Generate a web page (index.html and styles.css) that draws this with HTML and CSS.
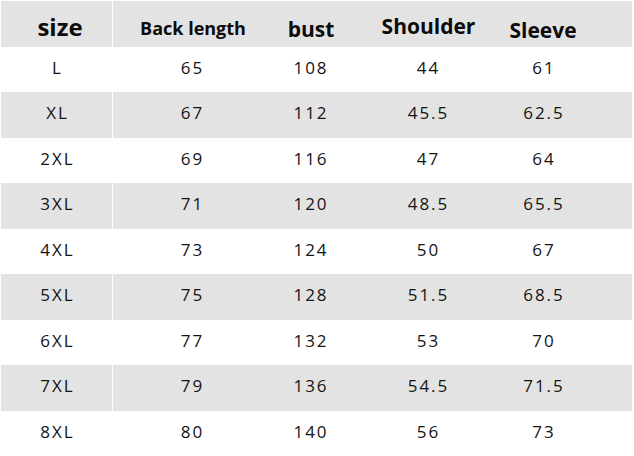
FILE: index.html
```html
<!DOCTYPE html>
<html>
<head>
<meta charset="utf-8">
<link rel="stylesheet" href="styles.css">
</head>
<body>
<div class="chart">
  <div class="row head">
    <div class="cell first h-size">size</div>
    <div class="cell h-back">Back length</div>
    <div class="cell h-bust">bust</div>
    <div class="cell h-shoulder">Shoulder</div>
    <div class="cell h-sleeve">Sleeve</div>
    <div class="cell"></div>
  </div>
  <div class="row"><div class="cell first">L</div><div class="cell">65</div><div class="cell">108</div><div class="cell">44</div><div class="cell">61</div><div class="cell"></div></div>
  <div class="row shade"><div class="cell first">XL</div><div class="cell">67</div><div class="cell">112</div><div class="cell">45.5</div><div class="cell">62.5</div><div class="cell"></div></div>
  <div class="row"><div class="cell first">2XL</div><div class="cell">69</div><div class="cell">116</div><div class="cell">47</div><div class="cell">64</div><div class="cell"></div></div>
  <div class="row shade"><div class="cell first">3XL</div><div class="cell">71</div><div class="cell">120</div><div class="cell">48.5</div><div class="cell">65.5</div><div class="cell"></div></div>
  <div class="row"><div class="cell first">4XL</div><div class="cell">73</div><div class="cell">124</div><div class="cell">50</div><div class="cell">67</div><div class="cell"></div></div>
  <div class="row shade"><div class="cell first">5XL</div><div class="cell">75</div><div class="cell">128</div><div class="cell">51.5</div><div class="cell">68.5</div><div class="cell"></div></div>
  <div class="row"><div class="cell first">6XL</div><div class="cell">77</div><div class="cell">132</div><div class="cell">53</div><div class="cell">70</div><div class="cell"></div></div>
  <div class="row shade"><div class="cell first">7XL</div><div class="cell">79</div><div class="cell">136</div><div class="cell">54.5</div><div class="cell">71.5</div><div class="cell"></div></div>
  <div class="row"><div class="cell first">8XL</div><div class="cell">80</div><div class="cell">140</div><div class="cell">56</div><div class="cell">73</div><div class="cell"></div></div>
</div>
</body>
</html>
```

FILE: styles.css
```css
html, body {
  margin: 0;
  padding: 0;
  background: #ffffff;
}

body {
  width: 634px;
  height: 456px;
  overflow: hidden;
}

.chart {
  margin: 1px 0 0 1px;
  width: 631px;
  display: flex;
  flex-direction: column;
  font-family: "Open Sans", "Noto Sans", sans-serif;
  color: #141414;
}

.row {
  display: grid;
  grid-template-columns: 112px 157px 80px 155px 76px 1fr;
  height: 45.5px;
  align-items: center;
  font-size: 17px;
  letter-spacing: 2px;
}

.row.head,
.row.shade {
  background: #e3e3e3;
}

.cell {
  height: 100%;
  display: flex;
  align-items: center;
  justify-content: center;
  padding: 0 0 4px 2px;
  white-space: nowrap;
  box-sizing: border-box;
}

.cell.first {
  border-right: 1px solid #ffffff;
}

.head .cell {
  font-weight: 700;
  letter-spacing: 0;
  color: #0c0c0c;
  padding: 0;
}

.head .h-size {
  font-size: 24px;
  padding: 6px 0 0 7px;
}

.head .h-back {
  font-size: 18px;
  padding: 9px 0 0 3px;
}

.head .h-bust {
  font-size: 21px;
  padding: 11px 0 0 2px;
}

.head .h-shoulder {
  font-size: 21px;
  padding: 5px 0 0 2px;
}

.head .h-sleeve {
  font-size: 21px;
  padding: 13px 0 0 0;
}
```
